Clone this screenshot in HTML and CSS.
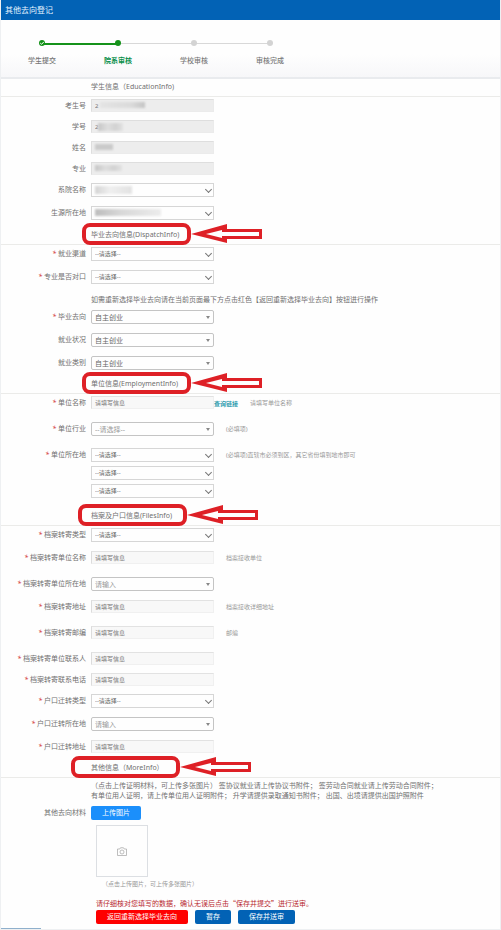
FILE: index.html
```html
<!DOCTYPE html>
<html lang="zh-CN">
<head>
    <meta charset="UTF-8">
    <meta name="viewport" content="width=device-width, initial-scale=1.0">
    <title>其他去向登记</title>
    <link rel="stylesheet" href="styles.css">
</head>
<body>
    <!-- Shared shapes -->
    <svg class="defs" width="0" height="0" aria-hidden="true">
        <symbol id="callout" viewBox="0 0 181 22">
            <rect x="2" y="2" width="105" height="18" rx="6" fill="none" stroke="#de2026" stroke-width="4" />
            <path fill="#de2026" fill-rule="evenodd" d="M109 11L145 1V6H180V16H145V20ZM124 11L140 15V13H177V9H140V7Z" />
        </symbol>
    </svg>

    <div class="page">
        <header class="header">
            <h1>其他去向登记</h1>
        </header>

        <!-- Progress -->
        <ol class="steps">
            <li class="step done">
                <span class="dot"><svg viewBox="0 0 6 6"><path d="M1.2 3L2.6 4.3L4.8 1.9" fill="none" stroke="#fff" stroke-width="1" /></svg></span>
                <span>学生提交</span>
            </li>
            <li class="step current">
                <span class="dot"></span>
                <span>院系审核</span>
            </li>
            <li class="step">
                <span class="dot"></span>
                <span>学校审核</span>
            </li>
            <li class="step">
                <span class="dot"></span>
                <span>审核完成</span>
            </li>
        </ol>

        <form>
            <!-- Student info -->
            <h2 class="title">学生信息（EducationInfo)</h2>
            <div class="group group-student">
                <div class="row row-short">
                    <label for="examNo">考生号</label>
                    <div class="field"><input class="locked" type="text" id="examNo" value="2" readonly><span class="mask mask-exam"></span></div>
                </div>
                <div class="row row-short">
                    <label for="studentNo">学号</label>
                    <div class="field"><input class="locked" type="text" id="studentNo" value="2" readonly><span class="mask mask-no"></span></div>
                </div>
                <div class="row row-short">
                    <label for="name">姓名</label>
                    <div class="field"><input class="locked" type="text" id="name" readonly><span class="mask mask-name"></span></div>
                </div>
                <div class="row row-short">
                    <label for="major">专业</label>
                    <div class="field"><input class="locked" type="text" id="major" readonly><span class="mask mask-major"></span></div>
                </div>
                <div class="row">
                    <label for="college">系院名称</label>
                    <div class="field select"><select id="college"><option></option></select><span class="mask mask-college"></span></div>
                </div>
                <div class="row">
                    <label for="origin">生源所在地</label>
                    <div class="field select"><select id="origin"><option></option></select><span class="mask mask-origin"></span></div>
                </div>
            </div>

            <!-- Dispatch info -->
            <h2 class="title">毕业去向信息(DispatchInfo)<svg class="callout"><use href="#callout" /></svg></h2>
            <div class="group">
                <div class="row">
                    <label for="channel"><i>*</i>就业渠道</label>
                    <div class="field select"><select id="channel"><option>--请选择--</option></select></div>
                </div>
                <div class="row">
                    <label for="match"><i>*</i>专业是否对口</label>
                    <div class="field select"><select id="match"><option>--请选择--</option></select></div>
                </div>
                <p class="note">如需重新选择毕业去向请在当前页面最下方点击红色【返回重新选择毕业去向】按钮进行操作</p>
                <div class="row">
                    <label for="direction"><i>*</i>毕业去向</label>
                    <div class="field combo"><select id="direction"><option>自主创业</option></select></div>
                </div>
                <div class="row">
                    <label for="status">就业状况</label>
                    <div class="field combo"><select id="status"><option>自主创业</option></select></div>
                </div>
                <div class="row">
                    <label for="category">就业类别</label>
                    <div class="field combo"><select id="category"><option>自主创业</option></select></div>
                </div>
            </div>

            <!-- Employment info -->
            <h2 class="title">单位信息(EmploymentInfo)<svg class="callout"><use href="#callout" /></svg></h2>
            <div class="group group-company">
                <div class="row row-tall">
                    <label for="company"><i>*</i>单位名称</label>
                    <div class="field"><input type="text" id="company" placeholder="请填写信息"></div>
                    <a class="link" href="#">查询链接</a>
                    <span class="hint">请填写单位名称</span>
                </div>
                <div class="row row-tall">
                    <label for="industry"><i>*</i>单位行业</label>
                    <div class="field combo empty"><select id="industry"><option>--请选择--</option></select></div>
                    <span class="hint">(必填项)</span>
                </div>
                <div class="row row-sub">
                    <label for="province"><i>*</i>单位所在地</label>
                    <div class="field select"><select id="province"><option>--请选择--</option></select></div>
                    <span class="hint">(必填项)直辖市必须到区，其它省份填到地市即可</span>
                </div>
                <div class="row row-sub">
                    <span class="blank"></span>
                    <div class="field select"><select id="city" aria-label="市"><option>--请选择--</option></select></div>
                </div>
                <div class="row row-sub">
                    <span class="blank"></span>
                    <div class="field select"><select id="district" aria-label="区"><option>--请选择--</option></select></div>
                </div>
            </div>

            <!-- Files info -->
            <h2 class="title">档案及户口信息(FilesInfo)<svg class="callout callout-files"><use href="#callout" /></svg></h2>
            <div class="group">
                <div class="row">
                    <label for="fileType"><i>*</i>档案转寄类型</label>
                    <div class="field select"><select id="fileType"><option>--请选择--</option></select></div>
                </div>
                <div class="row row-tall">
                    <label for="fileUnit"><i>*</i>档案转寄单位名称</label>
                    <div class="field"><input type="text" id="fileUnit" placeholder="请填写信息"></div>
                    <span class="hint">档案接收单位</span>
                </div>
                <div class="row">
                    <label for="filePlace"><i>*</i>档案转寄单位所在地</label>
                    <div class="field combo empty"><select id="filePlace"><option>请输入</option></select></div>
                </div>
                <div class="row row-tall">
                    <label for="fileAddress"><i>*</i>档案转寄地址</label>
                    <div class="field"><input type="text" id="fileAddress" placeholder="请填写信息"></div>
                    <span class="hint">档案接收详细地址</span>
                </div>
                <div class="row row-tall">
                    <label for="filePost"><i>*</i>档案转寄邮编</label>
                    <div class="field"><input type="text" id="filePost" placeholder="请填写信息"></div>
                    <span class="hint">邮编</span>
                </div>
                <div class="row row-short">
                    <label for="fileContact"><i>*</i>档案转寄单位联系人</label>
                    <div class="field"><input type="text" id="fileContact" placeholder="请填写信息"></div>
                </div>
                <div class="row row-short">
                    <label for="filePhone"><i>*</i>档案转寄联系电话</label>
                    <div class="field"><input type="text" id="filePhone" placeholder="请填写信息"></div>
                </div>
                <div class="row">
                    <label for="moveType"><i>*</i>户口迁转类型</label>
                    <div class="field select"><select id="moveType"><option>--请选择--</option></select></div>
                </div>
                <div class="row">
                    <label for="movePlace"><i>*</i>户口迁转所在地</label>
                    <div class="field combo empty"><select id="movePlace"><option>请输入</option></select></div>
                </div>
                <div class="row">
                    <label for="moveAddress"><i>*</i>户口迁转地址</label>
                    <div class="field"><input type="text" id="moveAddress" placeholder="请填写信息"></div>
                </div>
            </div>

            <!-- More info -->
            <h2 class="title">其他信息（MoreInfo）<svg class="callout callout-more"><use href="#callout" /></svg></h2>
            <div class="more">
                <p class="tips">（点击上传证明材料，可上传多张图片） 签协议就业请上传协议书附件； 签劳动合同就业请上传劳动合同附件；<br>有单位用人证明，请上传单位用人证明附件； 升学请提供录取通知书附件； 出国、出境请提供出国护照附件</p>
                <div class="upload">
                    <label for="uploadButton">其他去向材料</label>
                    <button class="upload-button" type="button" id="uploadButton">上传图片</button>
                </div>
                <div class="picture">
                    <svg viewBox="0 0 20 18" fill="none" stroke="#a8a8a8" stroke-width="1.5">
                        <path d="M1 4H5.5L7 1.5H13L14.5 4H19V17H1Z" />
                        <circle cx="10" cy="10" r="4" />
                    </svg>
                </div>
                <p class="caption">（点击上传图片，可上传多张图片）</p>
                <p class="warning">请仔细核对您填写的数据，确认无误后点击“保存并提交”进行送审。</p>
                <div class="actions">
                    <button class="button button-back" type="button">返回重新选择毕业去向</button>
                    <button class="button button-save" type="button">暂存</button>
                    <button class="button button-submit" type="submit">保存并送审</button>
                </div>
            </div>
        </form>
        <div class="status-line"></div>
    </div>
</body>
</html>
```
FILE: styles.css
```css
/* Global styles */
:root {
    --primary-color: #0262b5;
    --upload-color: #1b8ffb;
    --done-color: #15921a;
    --danger-color: #fe0000;
    --text-color: #707070;
    --gray-color: #999;
    --line-color: #ebebe9;
    --label-width: 86px;
    --field-width: 123px;
}

* {
    box-sizing: border-box;
}

body {
    margin: 0;
    background-color: #fefefe;
    color: var(--text-color);
    font-family: "Noto Sans", "Noto Sans CJK SC", sans-serif;
    font-size: 7px;
    line-height: 10px;
}

h1,
h2,
p,
ol {
    margin: 0;
    padding: 0;
    font-weight: 400;
}

input,
select,
button {
    font-family: inherit;
    margin: 0;
}

.defs {
    position: absolute;
}

.page {
    border: 1px solid #eef0f2;
    border-top: none;
}

/* Header */
.header {
    display: flex;
    align-items: center;
    height: 20px;
    padding-left: 4px;
    background-color: var(--primary-color);
}

.header h1 {
    color: #e4f4ff;
    font-size: 8px;
}

/* Progress steps */
.steps {
    display: flex;
    height: 59px;
    padding: 20px 0 0 3px;
    border-bottom: 2px solid #e9ebee;
    background: linear-gradient(#fefefe 60%, #f7f7f9);
    list-style: none;
}

.step {
    display: grid;
    grid-template-rows: 7px 10px;
    row-gap: 9px;
    justify-items: center;
    width: 76px;
    height: 26px;
    color: #777;
    font-weight: 500;
    background: linear-gradient(#d8d8d8, #d8d8d8) 0 3px / 100% 1px no-repeat;
}

.step:first-child {
    background: linear-gradient(var(--done-color), var(--done-color)) 100% 3px / 50% 2px no-repeat;
}

.step.current {
    color: #0a8f4c;
    font-weight: 700;
    background:
        linear-gradient(var(--done-color), var(--done-color)) 0 3px / 50% 2px no-repeat,
        linear-gradient(#d8d8d8, #d8d8d8) 0 3px / 100% 1px no-repeat;
}

.step:last-child {
    background-size: 50% 1px;
}

.dot {
    width: 6px;
    height: 6px;
    border-radius: 50%;
    background-color: #d3d3d3;
}

.dot svg {
    display: block;
}

.done .dot,
.current .dot {
    background-color: var(--done-color);
}

/* Section titles */
.title {
    position: relative;
    height: 18px;
    padding-left: 90px;
    border-bottom: 1px solid var(--line-color);
    font-size: 7px;
    line-height: 16px;
}

.callout {
    position: absolute;
    left: 81px;
    bottom: -1px;
    width: 181px;
    height: 22px;
}

.callout-files {
    left: 77px;
}

.callout-more {
    left: 70px;
}

/* Form rows */
.group {
    padding: 2px 0 6px;
}

.group-student {
    padding-bottom: 7px;
}

.group-company {
    padding-bottom: 10px;
}

.row {
    display: flex;
    align-items: flex-start;
    height: 23px;
    line-height: 14px;
}

.row-short {
    height: 21px;
}

.row-tall {
    height: 26px;
}

.row-sub {
    height: 18px;
}

.row:last-child {
    height: 14px;
}

.row label,
.blank,
.upload label {
    flex: none;
    width: var(--label-width);
    padding-right: 1px;
    margin-right: 4px;
    text-align: right;
    white-space: nowrap;
}

.row i {
    margin-right: 2px;
    color: #d03030;
}

.field {
    position: relative;
    display: grid;
    flex: none;
    align-items: center;
    width: var(--field-width);
}

.field input {
    width: 100%;
    height: 13px;
    padding: 0 3px;
    border: 1px solid #f0f0f0;
    border-top-color: #e2e2e2;
    border-left-color: #dcdcdc;
    background-color: #f8f8f8;
    color: #777;
    font-size: 6px;
}

.field input::placeholder {
    color: #777;
    opacity: 1;
}

.field input.locked {
    border-color: #dedede #ebebeb #ebebeb #dedede;
    background-color: #ededed;
}

.field select {
    grid-area: 1 / 1;
    width: 100%;
    height: 14px;
    padding: 0 3px;
    border: 1px solid #d6d6d6;
    border-radius: 0;
    appearance: none;
    background-color: #fefefe;
    color: #666;
    font-size: 6px;
}

.combo select {
    border-color: #c4c4c4;
    border-radius: 2px;
    font-size: 7px;
}

.combo.empty select {
    color: var(--gray-color);
}

.select::after {
    content: "";
    grid-area: 1 / 1;
    justify-self: end;
    width: 4px;
    height: 4px;
    margin: 0 3px 2px 0;
    border: solid #777;
    border-width: 0 1px 1px 0;
    transform: rotate(45deg);
    pointer-events: none;
}

.combo::after {
    content: "";
    grid-area: 1 / 1;
    justify-self: end;
    margin-right: 4px;
    border: 2px solid transparent;
    border-top: 3px solid #888;
    border-bottom: none;
    pointer-events: none;
}

/* Smudges over private values */
.mask {
    position: absolute;
    top: 3px;
    left: 4px;
    width: 27px;
    height: 8px;
    background: linear-gradient(90deg, #c6c6c6, #dedede 40%, #d2d2d2 70%, #e2e2e2);
    filter: blur(1px);
}

.mask-exam {
    left: 9px;
    width: 45px;
    height: 6px;
    background: linear-gradient(90deg, #e4e4e4, #dadada 70%, #c4c4c4);
}

.mask-no {
    left: 7px;
    width: 25px;
}

.mask-name {
    width: 18px;
    height: 6px;
    background: #cacaca;
}

.mask-major {
    height: 6px;
}

.mask-college {
    width: 37px;
    background: linear-gradient(90deg, #d4d4d4, #efefef 40%, #e2e2e2);
}

.mask-origin {
    width: 66px;
    height: 7px;
    background: linear-gradient(90deg, #bdbdbd, #d8d8d8 40%, #ececec);
}

.note {
    height: 17px;
    padding-left: 90px;
    line-height: 13px;
}

.hint {
    margin-left: 12px;
    color: var(--gray-color);
    font-size: 6px;
}

.link {
    color: #2b9aac;
    font-size: 6px;
    font-weight: 700;
    line-height: 16px;
    text-decoration: none;
}

/* Upload area */
.more {
    padding: 3px 0 4px;
}

.tips {
    padding-left: 90px;
    white-space: nowrap;
}

.upload {
    display: flex;
    margin-top: 5px;
    line-height: 14px;
}

.upload-button,
.button {
    height: 14px;
    padding: 0 10px;
    border: none;
    border-radius: 2px;
    background-color: var(--primary-color);
    color: #fff;
    font-size: 7px;
    line-height: 14px;
    cursor: pointer;
}

.upload-button {
    width: 50px;
    background-color: var(--upload-color);
}

.picture {
    display: flex;
    align-items: center;
    justify-content: center;
    width: 52px;
    height: 52px;
    margin: 5px 0 0 95px;
    border: 1px solid #dcdfe3;
}

.picture svg {
    width: 10px;
    height: 9px;
}

.caption {
    margin-top: 2px;
    padding-left: 101px;
    color: var(--gray-color);
    font-size: 6px;
}

.warning {
    margin-top: 9px;
    padding-left: 95px;
    color: #b8292f;
    font-family: "Noto Sans CJK SC", sans-serif;
}

.actions {
    display: flex;
    gap: 7px;
    margin: 2px 0 0 95px;
}

.button-back {
    width: 92px;
    background-color: var(--danger-color);
}

.button-save {
    width: 36px;
}

.button-submit {
    width: 57px;
}

/* Loading strip at the page bottom */
.status-line {
    width: 40px;
    height: 1px;
    background-color: #8fb0cc;
}
```
